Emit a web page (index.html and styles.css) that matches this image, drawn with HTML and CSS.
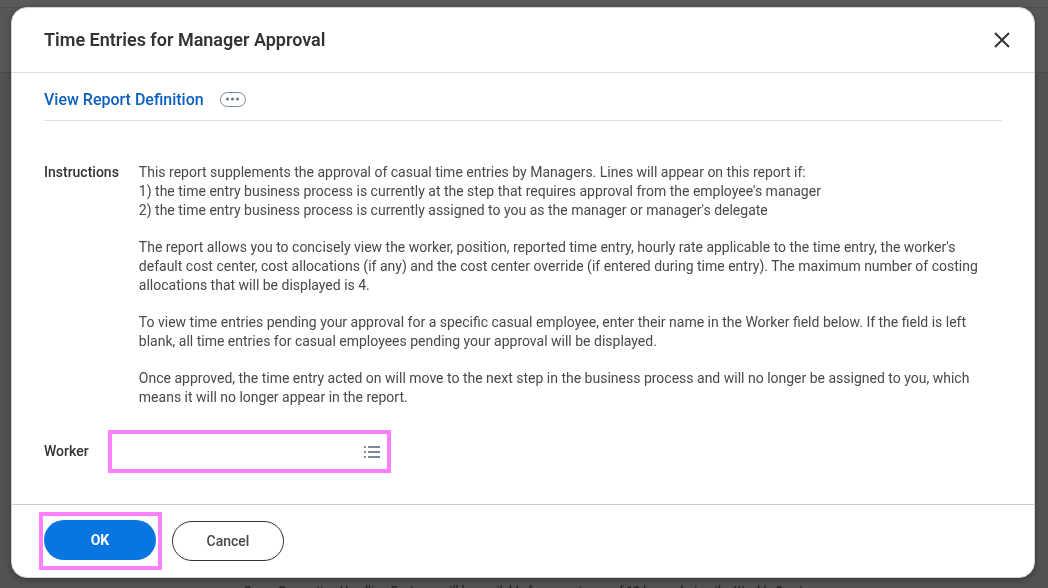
FILE: index.html
```html
<!DOCTYPE html>
<html lang="en">
<head>
  <meta charset="UTF-8">
  <meta name="viewport" content="width=device-width, initial-scale=1.0">
  <title>Time Entries for Manager Approval</title>
  <link rel="stylesheet" href="styles.css">
</head>
<body>

  <div class="page-behind">
    <div class="page-top"></div>
    <div class="page-bar"></div>
    <div class="page-main">
      <p class="notice">Some Generation Handling Features will be available for a maximum of 12 hours during the Weekly Service</p>
    </div>
  </div>

  <div class="overlay">
    <section class="dialog" role="dialog" aria-labelledby="dialog-title">
      <header class="dialog-header">
        <h1 id="dialog-title">Time Entries for Manager Approval</h1>
        <button class="close" type="button" aria-label="Close">
          <svg width="16" height="16" viewBox="0 0 16 16"><path d="M1 1L15 15M15 1L1 15" fill="none" stroke="#333" stroke-width="2"/></svg>
        </button>
      </header>

      <form class="dialog-form">
        <div class="dialog-body">
          <div class="report-bar">
            <a href="#">View Report Definition</a>
            <button class="more" type="button" aria-label="Related actions">
              <svg width="26" height="15" viewBox="0 0 26 15">
                <rect x="0.5" y="0.5" width="25" height="14" rx="7" fill="#fff" stroke="#7b8b9a"/>
                <circle cx="7.5" cy="7" r="1.6" fill="#6c7b8a"/>
                <circle cx="12.5" cy="7" r="1.6" fill="#6c7b8a"/>
                <circle cx="17.5" cy="7" r="1.6" fill="#6c7b8a"/>
              </svg>
            </button>
          </div>

          <div class="instructions">
            <h2>Instructions</h2>
            <div class="instructions-text">
              <p>This report supplements the approval of casual time entries by Managers. Lines will appear on this report if:<br>
              1) the time entry business process is currently at the step that requires approval from the employee's manager<br>
              2) the time entry business process is currently assigned to you as the manager or manager's delegate</p>
              <p>The report allows you to concisely view the worker, position, reported time entry, hourly rate applicable to the time entry, the worker's default cost center, cost allocations (if any) and the cost center override (if entered during time entry). The maximum number of costing allocations that will be displayed is 4.</p>
              <p>To view time entries pending your approval for a specific casual employee, enter their name in the Worker field below. If the field is left blank, all time entries for casual employees pending your approval will be displayed.</p>
              <p>Once approved, the time entry acted on will move to the next step in the business process and will no longer be assigned to you, which means it will no longer appear in the report.</p>
            </div>
          </div>

          <div class="worker-row">
            <label for="worker">Worker</label>
            <div class="worker-field highlight">
              <input type="text" id="worker" name="worker">
              <button class="prompt" type="button" aria-label="Show list">
                <svg width="16" height="12" viewBox="0 0 16 12" fill="#7b8b9a"><path d="M0 0h2v2H0zM4 0h12v2H4zM0 5h2v2H0zM4 5h12v2H4zM0 10h2v2H0zM4 10h12v2H4z"/></svg>
              </button>
            </div>
          </div>
        </div>

        <footer class="dialog-footer">
          <div class="highlight ok-box">
            <button class="btn btn-ok" type="submit">OK</button>
          </div>
          <button class="btn btn-cancel" type="button">Cancel</button>
        </footer>
      </form>
    </section>
  </div>

</body>
</html>
```
FILE: styles.css
```css
* {
  box-sizing: border-box;
}
body {
  margin: 0;
  background: #525252;
  color: #494949;
  font-family: Roboto, "Liberation Sans", sans-serif;
  font-size: 14px;
  line-height: 19px;
}
h1, h2, p {
  margin: 0;
}
button {
  font-family: inherit;
  cursor: pointer;
}
svg {
  display: block;
}

/* dimmed page under the dialog */
.page-behind {
  position: fixed;
  inset: 0;
  display: flex;
  flex-direction: column;
  overflow: hidden;
}
.page-top {
  height: 7px;
  background: #595959;
}
.page-bar {
  height: 66px;
  background: #575757;
  border-top: 1px solid #505050;
  border-bottom: 1px solid #4b4b4b;
}
.page-main {
  flex: 1;
  display: flex;
  align-items: flex-end;
}
.notice {
  margin: 0 0 -13px 244px;
  color: #252525;
  font-size: 12px;
  font-weight: 500;
  white-space: nowrap;
}

.overlay {
  position: relative;
  display: flex;
  flex-direction: column;
  min-height: 100vh;
  padding: 7px 13px 10px 11px;
}
.dialog {
  flex: 1;
  display: flex;
  flex-direction: column;
  background: #fff;
  border: 1px solid #ced3d9;
  border-radius: 16px;
  box-shadow: 0 2px 6px rgba(0, 0, 0, 0.3);
}
.dialog-header {
  display: flex;
  align-items: center;
  justify-content: space-between;
  height: 65px;
  padding: 0 24px 0 32px;
  border-bottom: 1px solid #dedfe3;
}
h1 {
  color: #333;
  font-size: 18px;
  font-weight: 600;
  line-height: 20px;
}
.close, .more, .prompt {
  padding: 0;
  border: 0;
  background: none;
}

.dialog-form {
  flex: 1;
  display: flex;
  flex-direction: column;
}
.dialog-body {
  flex: 1;
  padding: 0 32px;
}
.report-bar {
  display: flex;
  align-items: center;
  gap: 16px;
  height: 48px;
  padding-top: 6px;
  border-bottom: 1px solid #dedfe3;
}
.report-bar a {
  color: #0b5fbf;
  font-size: 16px;
  font-weight: 500;
  text-decoration: none;
}
.instructions {
  display: flex;
  gap: 20px;
  margin-top: 42px;
}
h2, label {
  color: #333;
  font-size: 14px;
  font-weight: 500;
}
.instructions-text {
  flex: 1;
}
.instructions-text p + p {
  margin-top: 18px;
}
.worker-row {
  display: flex;
  align-items: center;
  gap: 19px;
  margin-top: 23px;
}
.highlight {
  border: 4px solid #ff80ff;
}
.worker-field {
  display: flex;
  align-items: center;
  width: 283px;
  height: 43px;
  padding-right: 7px;
}
.worker-field input {
  flex: 1;
  min-width: 0;
  height: 32px;
  padding: 0 8px;
  border: 0;
  outline: 0;
  background: none;
  font: inherit;
}

.dialog-footer {
  display: flex;
  align-items: center;
  gap: 10px;
  height: 73px;
  padding: 0 27px;
  border-top: 1px solid #ccc;
}
.ok-box {
  padding: 4px 2px 6px 1px;
}
.btn {
  display: block;
  width: 112px;
  height: 40px;
  padding: 0 0 1px;
  border-radius: 20px;
  font-size: 14px;
}
.btn-ok {
  border: 0;
  background: #0875e1;
  color: #fff;
  font-weight: 700;
}
.btn-cancel {
  border: 1px solid #333;
  background: #fff;
  color: #494949;
  font-weight: 500;
}
```
